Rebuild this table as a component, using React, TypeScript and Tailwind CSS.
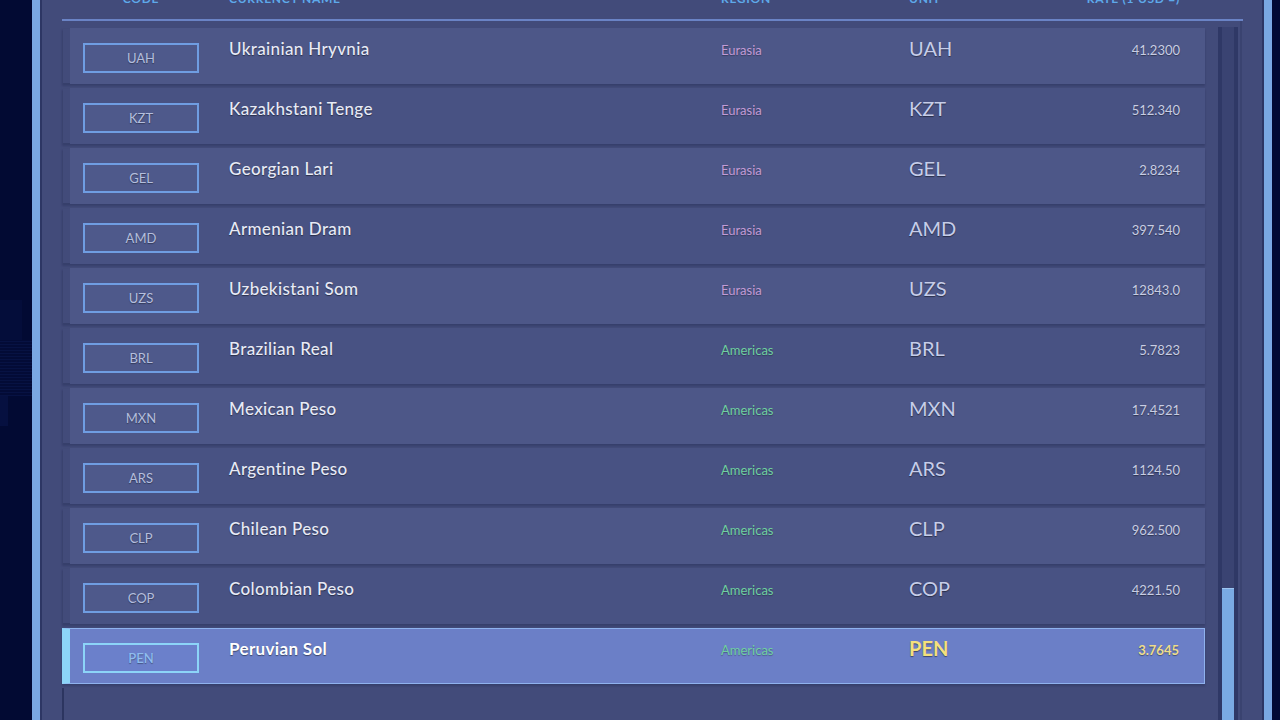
import React from 'react';

type Region = 'Eurasia' | 'Americas';

interface Currency {
  code: string;
  name: string;
  region: Region;
  rate: string;
}

const currencies: Currency[] = [
  { code: 'UAH', name: 'Ukrainian Hryvnia', region: 'Eurasia', rate: '41.2300' },
  { code: 'KZT', name: 'Kazakhstani Tenge', region: 'Eurasia', rate: '512.340' },
  { code: 'GEL', name: 'Georgian Lari', region: 'Eurasia', rate: '2.8234' },
  { code: 'AMD', name: 'Armenian Dram', region: 'Eurasia', rate: '397.540' },
  { code: 'UZS', name: 'Uzbekistani Som', region: 'Eurasia', rate: '12843.0' },
  { code: 'BRL', name: 'Brazilian Real', region: 'Americas', rate: '5.7823' },
  { code: 'MXN', name: 'Mexican Peso', region: 'Americas', rate: '17.4521' },
  { code: 'ARS', name: 'Argentine Peso', region: 'Americas', rate: '1124.50' },
  { code: 'CLP', name: 'Chilean Peso', region: 'Americas', rate: '962.500' },
  { code: 'COP', name: 'Colombian Peso', region: 'Americas', rate: '4221.50' },
  { code: 'PEN', name: 'Peruvian Sol', region: 'Americas', rate: '3.7645' },
];

const regionColor: Record<Region, string> = {
  Eurasia: 'text-[#c39bd6]',
  Americas: 'text-[#6fd0a0]',
};

const selectedCode = 'PEN';

function CurrencyRow({ item, index }: { item: Currency; index: number }) {
  const selected = item.code === selectedCode;
  const shade = index % 2 === 0 ? 'bg-[#4d5788]' : 'bg-[#485283]';

  return (
    <div
      className={`flex items-start h-[56px] mb-[4px] pr-[25px] border-l-[8px] bg-clip-padding shadow-[0_2px_2px_rgba(10,16,50,0.2)] ${
        selected
          ? 'pt-[7px] bg-[#6b7fc7] border-l-[#8cd4f8] border-y border-r border-y-[#8fb2ee] border-r-[#8fb2ee]'
          : `pt-[8px] ${shade} border-l-transparent`
      }`}
    >
      <div className="w-[159px] shrink-0">
        <div
          className={`ml-[13px] mt-[7px] w-[116px] h-[30px] border-2 flex items-center justify-center pt-[1px] text-[13px] ${
            selected
              ? 'border-[#8cd4f8] bg-[#6b80cb] text-[#8fbcef] font-semibold'
              : 'border-[#6f9de2] bg-[#4e598b] text-[#b4bedd]'
          } [text-shadow:0_1px_1px_rgba(0,0,0,0.35)]`}
        >
          {item.code}
        </div>
      </div>
      <div
        className={`w-[492px] shrink-0 text-[17px] leading-[26px] tracking-[0.02em] [text-shadow:0_1px_1px_rgba(0,0,0,0.45)] ${
          selected ? 'font-bold text-white' : 'font-medium text-[#e7eaf6]'
        }`}
      >
        {item.name}
      </div>
      <div
        className={`w-[188px] shrink-0 mt-[1px] text-[13px] leading-[26px] ${regionColor[item.region]} [text-shadow:0_1px_1px_rgba(0,0,0,0.3)]`}
      >
        {item.region}
      </div>
      <div
        className={`flex-1 -mt-[1px] text-[20px] leading-[26px] [text-shadow:0_1px_1px_rgba(0,0,0,0.45)] ${
          selected ? 'font-bold text-[#f4e07c]' : 'text-[#c6cde9]'
        }`}
      >
        {item.code}
      </div>
      <div
        className={`mt-[1px] text-[13px] leading-[26px] text-right [text-shadow:0_1px_1px_rgba(0,0,0,0.4)] ${
          selected ? 'font-bold text-[#eedd8c]' : 'text-[#c8cde3]'
        }`}
      >
        {item.rate}
      </div>
    </div>
  );
}

export default function App() {
  return (
    <div className="h-[720px] overflow-hidden flex bg-[#020a33] font-['Lato','Noto_Sans',sans-serif]">
      {/* backdrop gutter */}
      <div className="w-[32px] shrink-0 flex flex-col">
        <div className="h-[300px]" />
        <div className="h-[40px] w-[22px] bg-[#040d3a]" />
        <div className="h-[56px] bg-[repeating-linear-gradient(0deg,#071243_0px,#071243_1px,#030b36_1px,#030b36_3px)]" />
        <div className="h-[30px] w-[8px] bg-[#061040]" />
      </div>

      <div className="w-[1240px] shrink-0 border-x-[8px] border-[#7aa8e2] flex">
        <div className="flex-1 border-x-2 border-[#2d3664] bg-[#424b7a] pl-[20px] pr-[19px]">
          <div className="w-[1181px] flex flex-col h-full">
            {/* header */}
            <div className="h-[21px] shrink-0 border-b-2 border-[#6a83c5]">
              <div className="-mt-[9px] flex items-start pl-[8px] pr-[63px] text-[12px] leading-[16px] font-bold tracking-[0.06em] text-[#5ea9ea]">
                <div className="w-[159px] shrink-0">
                  <div className="ml-[13px] w-[116px] text-center">CODE</div>
                </div>
                <div className="w-[492px] shrink-0">CURRENCY NAME</div>
                <div className="w-[188px] shrink-0">REGION</div>
                <div className="flex-1">UNIT</div>
                <div className="text-right">RATE (1 USD =)</div>
              </div>
            </div>

            {/* body */}
            <div className="flex flex-1 min-h-0">
              <div className="w-[1143px] shrink-0 pt-[7px] flex flex-col">
                {currencies.map((c, i) => (
                  <CurrencyRow key={c.code} item={c} index={i} />
                ))}
                <div className="flex-1 border-l-2 border-[#2c3560]" />
              </div>
              <div className="ml-[13px] mt-[6px] w-[20px] shrink-0 border-l-[4px] border-r-[4px] border-l-[#2f3866] border-r-[#2f3866] bg-[#3a4372] flex flex-col">
                <div className="flex-1" />
                <div className="h-[132px] bg-[#7aaae3] border-t border-[#9cc4f0]" />
              </div>
              <div className="ml-[2px] w-[3px] border-l-2 border-[#3a4370]" />
            </div>
          </div>
        </div>
      </div>
    </div>
  );
}
